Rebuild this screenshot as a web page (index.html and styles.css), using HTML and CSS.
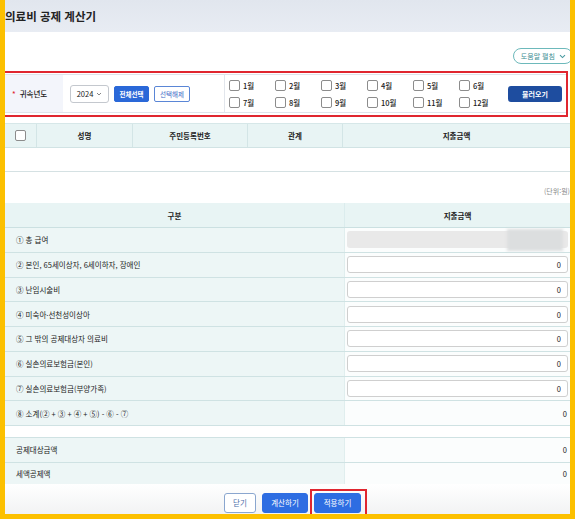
FILE: index.html
```html
<!DOCTYPE html>
<html lang="ko">
<head>
    <meta charset="UTF-8">
    <title>의료비 공제 계산기</title>
    <link rel="stylesheet" href="styles.css">
</head>
<body>
    <div class="page">
        <div class="title-bar">
            <h1>의료비 공제 계산기</h1>
        </div>

        <div class="help-row">
            <button class="help-btn">도움말 펼침
                <svg width="7" height="5" viewBox="0 0 7 5"><path d="M1 1.2 3.5 3.6 6 1.2" fill="none" stroke="#4a9aa0" stroke-width="1.1"/></svg>
            </button>
        </div>

        <div class="filter-box">
            <div class="filter-row">
                <div class="filter-label"><span class="req">*</span>귀속년도</div>
                <div class="filter-year">
                    <div class="year-select">2024
                        <svg width="6" height="4" viewBox="0 0 6 4"><path d="M1 1 3 3 5 1" fill="none" stroke="#777" stroke-width="0.9"/></svg>
                    </div>
                    <button class="btn-sm btn-fill">전체선택</button>
                    <button class="btn-sm btn-line">선택해제</button>
                </div>
                <div class="month-grid">
                    <label class="month"><span class="chk"></span>1월</label>
                    <label class="month"><span class="chk"></span>2월</label>
                    <label class="month"><span class="chk"></span>3월</label>
                    <label class="month"><span class="chk"></span>4월</label>
                    <label class="month"><span class="chk"></span>5월</label>
                    <label class="month"><span class="chk"></span>6월</label>
                    <label class="month"><span class="chk"></span>7월</label>
                    <label class="month"><span class="chk"></span>8월</label>
                    <label class="month"><span class="chk"></span>9월</label>
                    <label class="month"><span class="chk"></span>10월</label>
                    <label class="month"><span class="chk"></span>11월</label>
                    <label class="month"><span class="chk"></span>12월</label>
                </div>
                <div class="filter-action">
                    <button class="btn-load">불러오기</button>
                </div>
            </div>
        </div>

        <div class="list-table">
            <div class="list-head">
                <div class="cell"><span class="chk"></span></div>
                <div class="cell">성명</div>
                <div class="cell">주민등록번호</div>
                <div class="cell">관계</div>
                <div class="cell">지출금액</div>
            </div>
            <div class="list-empty"></div>
        </div>

        <div class="unit">(단위:원)</div>

        <div class="calc">
            <div class="calc-head">
                <div class="cell">구분</div>
                <div class="cell">지출금액</div>
            </div>
            <div class="calc-row">
                <div class="calc-label">① 총 급여</div>
                <div class="calc-val"><div class="masked"><span class="blur"></span></div></div>
            </div>
            <div class="calc-row">
                <div class="calc-label">② 본인, 65세이상자, 6세이하자, 장애인</div>
                <div class="calc-val"><input class="num" type="text" value="0"></div>
            </div>
            <div class="calc-row">
                <div class="calc-label">③ 난임시술비</div>
                <div class="calc-val"><input class="num" type="text" value="0"></div>
            </div>
            <div class="calc-row">
                <div class="calc-label">④ 미숙아·선천성이상아</div>
                <div class="calc-val"><input class="num" type="text" value="0"></div>
            </div>
            <div class="calc-row">
                <div class="calc-label">⑤ 그 밖의 공제대상자 의료비</div>
                <div class="calc-val"><input class="num" type="text" value="0"></div>
            </div>
            <div class="calc-row">
                <div class="calc-label">⑥ 실손의료보험금(본인)</div>
                <div class="calc-val"><input class="num" type="text" value="0"></div>
            </div>
            <div class="calc-row">
                <div class="calc-label">⑦ 실손의료보험금(부양가족)</div>
                <div class="calc-val"><input class="num" type="text" value="0"></div>
            </div>
            <div class="calc-row">
                <div class="calc-label">⑧ 소계(② + ③ + ④ + ⑤) - ⑥ - ⑦</div>
                <div class="calc-val text">0</div>
            </div>
        </div>

        <div class="calc-gap"></div>

        <div class="calc result">
            <div class="calc-row">
                <div class="calc-label">공제대상금액</div>
                <div class="calc-val text">0</div>
            </div>
            <div class="calc-row last">
                <div class="calc-label">세액공제액</div>
                <div class="calc-val text">0</div>
            </div>
        </div>

        <div class="footer">
            <button class="btn-foot btn-close">닫기</button>
            <button class="btn-foot btn-blue">계산하기</button>
            <div class="mark"><button class="btn-foot btn-blue">적용하기</button></div>
        </div>
    </div>
</body>
</html>
```

FILE: styles.css
```css
body {
    margin: 0;
    background-color: #fcc000;
    font-family: "Noto Sans CJK KR", "Noto Sans", sans-serif;
    color: #333;
}
button {
    font-family: inherit;
    cursor: pointer;
}
.page {
    margin: 0 5px;
    height: 514px;
    background-color: #fff;
    overflow: hidden;
}
.title-bar {
    height: 32px;
    background: linear-gradient(#e1e6ee, #e8ecf3);
    display: flex;
    align-items: center;
}
.title-bar h1 {
    margin: 0;
    font-size: 11.5px;
    font-weight: bold;
    color: #222;
}
.help-row {
    height: 39px;
    display: flex;
    justify-content: flex-end;
    align-items: flex-start;
    margin-right: -3px;
}
.help-btn {
    margin-top: 16px;
    height: 16px;
    padding: 0 6px 0 7px;
    border: 1px solid #6db9bb;
    border-radius: 8px;
    background-color: #fff;
    color: #3e8e94;
    font-size: 7px;
    display: flex;
    align-items: center;
    gap: 4px;
}

/* 조회 조건 */
.filter-box {
    border: 2px solid #e0262f;
    border-left: none;
    margin-right: 2px;
    padding: 1px 0 2px;
}
.filter-row {
    height: 39px;
    box-sizing: border-box;
    border-top: 1px solid #dfe3ea;
    border-bottom: 1px solid #dfe3ea;
    display: flex;
    align-items: stretch;
}
.filter-label {
    width: 58px;
    background-color: #f3f5fb;
    display: flex;
    align-items: center;
    padding-left: 7px;
    box-sizing: border-box;
    font-size: 7.5px;
    font-weight: 500;
    color: #222;
}
.req {
    color: #e0262f;
    margin-right: 4px;
}
.filter-year {
    width: 162px;
    border-right: 1px solid #e2e6ec;
    display: flex;
    align-items: center;
    padding-left: 7px;
    gap: 5px;
    box-sizing: border-box;
}
.year-select {
    width: 39px;
    height: 18px;
    box-sizing: border-box;
    border: 1px solid #c4c8ce;
    border-radius: 3px;
    display: flex;
    align-items: center;
    justify-content: center;
    gap: 3px;
    font-size: 7.5px;
    color: #222;
}
.btn-sm {
    height: 16px;
    padding: 0 3px;
    border-radius: 2px;
    font-size: 6.5px;
    font-weight: bold;
}
.btn-fill {
    width: 35px;
    background-color: #2a68d8;
    border: 1px solid #2a68d8;
    color: #fff;
}
.btn-line {
    width: 36px;
    background-color: #fff;
    border: 1px solid #5a86d6;
    color: #3b6bc8;
    font-weight: normal;
}
.month-grid {
    display: grid;
    grid-template-columns: repeat(6, 46px);
    grid-template-rows: 17px 17px;
    align-content: center;
    padding-left: 4px;
}
.month {
    display: flex;
    align-items: center;
    gap: 3px;
    font-size: 7.5px;
    font-weight: 500;
    color: #222;
}
.chk {
    display: inline-block;
    width: 11px;
    height: 11px;
    box-sizing: border-box;
    border: 1px solid #8c8c8c;
    border-radius: 2px;
    background-color: #fff;
}
.filter-action {
    flex: 1;
    display: flex;
    align-items: center;
    justify-content: flex-end;
    padding-right: 4px;
}
.btn-load {
    width: 54px;
    height: 16px;
    border: none;
    border-radius: 3px;
    background-color: #1e4d9f;
    color: #fff;
    font-size: 7px;
    font-weight: bold;
}

/* 대상자 목록 */
.list-table {
    margin-top: 6px;
}
.list-head {
    height: 25px;
    display: grid;
    grid-template-columns: 31px 96px 115px 95px 1fr;
    background-color: #e8f4f4;
    border-top: 1px solid #d6e7e8;
    border-bottom: 1px solid #d1e3e4;
    box-sizing: border-box;
}
.list-head .cell {
    display: flex;
    align-items: center;
    justify-content: center;
    font-size: 7.5px;
    font-weight: bold;
    color: #222;
    border-left: 1px solid #d3e5e6;
}
.list-head .cell:first-child {
    border-left: none;
}
.list-empty {
    height: 24px;
    border-bottom: 1px solid #d5e1e3;
    box-sizing: border-box;
}
.unit {
    height: 31px;
    display: flex;
    align-items: flex-end;
    justify-content: flex-end;
    padding-bottom: 7px;
    box-sizing: border-box;
    font-size: 7px;
    color: #8a8a8a;
}

/* 계산표 */
.calc-head {
    height: 25px;
    display: grid;
    grid-template-columns: 339px 1fr;
    background-color: #e8f4f4;
    border-bottom: 1px solid #cbe0e1;
    box-sizing: border-box;
}
.calc-head .cell {
    display: flex;
    align-items: center;
    justify-content: center;
    font-size: 7.5px;
    font-weight: bold;
    color: #222;
}
.calc-head .cell + .cell {
    border-left: 1px solid #dbeced;
}
.calc-row {
    height: 24.75px;
    display: grid;
    grid-template-columns: 339px 1fr;
    border-bottom: 1px solid #cfe2e3;
    box-sizing: border-box;
}
.calc-label {
    background-color: #edf6f6;
    display: flex;
    align-items: center;
    padding-left: 11px;
    font-size: 7.5px;
    color: #222;
}
.calc-val {
    background-color: #fbfdfd;
    border-left: 1px solid #e0eeee;
    display: flex;
    align-items: center;
    padding: 0 2px;
}
.calc-val.text {
    justify-content: flex-end;
    padding-right: 3px;
    font-size: 7.5px;
    color: #222;
}
.num {
    width: 100%;
    height: 17px;
    box-sizing: border-box;
    border: 1px solid #cfcfcf;
    border-radius: 3px;
    padding: 0 6px;
    text-align: right;
    font-family: inherit;
    font-size: 7.5px;
    color: #222;
}
.masked {
    position: relative;
    width: 100%;
    height: 17px;
    border-radius: 3px;
    background-color: #e9e9e9;
}
.masked .blur {
    position: absolute;
    right: 5px;
    top: -2px;
    width: 56px;
    height: 22px;
    background-color: #dcdedf;
    filter: blur(1.5px);
}
.calc-gap {
    height: 11px;
    border-bottom: 1px solid #cfe2e3;
}
.calc-row.last {
    height: 21px;
    border-bottom: none;
}

/* 하단 버튼 */
.footer {
    height: 32px;
    display: flex;
    align-items: flex-start;
    padding: 5px 0 0 219px;
    box-sizing: border-box;
    background: linear-gradient(#fff, #f1f2f3);
}
.btn-foot {
    height: 20px;
    margin-top: 4px;
    border-radius: 3px;
    font-size: 7.5px;
}
.btn-close {
    width: 32px;
    background-color: #fff;
    border: 1px solid #8aa6cf;
    color: #4a6ea8;
}
.btn-blue {
    width: 46px;
    margin-left: 6px;
    background-color: #2e6de2;
    border: 1px solid #2e6de2;
    color: #fff;
}
.mark {
    display: flex;
    margin-left: 2px;
    border: 2px solid #e0262f;
    padding: 2px 4px 6px 2px;
}
.mark .btn-blue {
    width: 47px;
    margin: 0;
}
```
